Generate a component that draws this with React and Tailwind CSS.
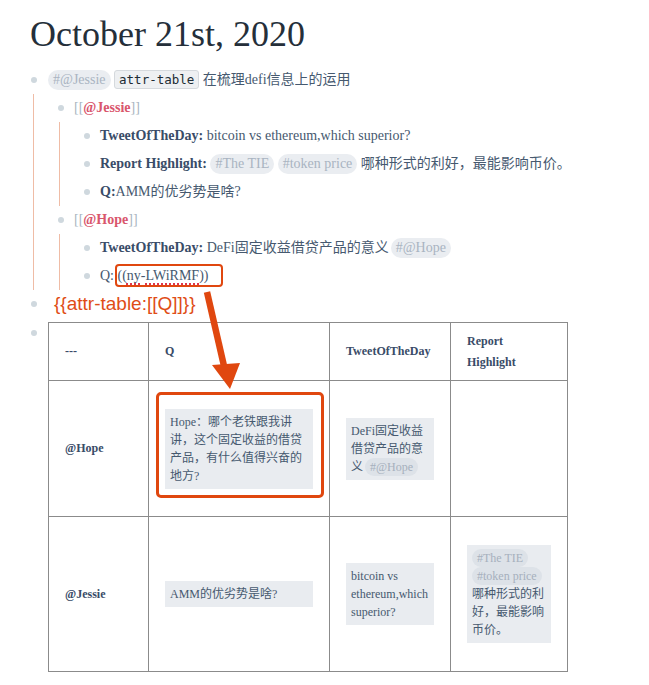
import React from "react";

const Bullet = ({ className = "" }) => (
  <span className={"block w-[6px] h-[6px] rounded-full bg-[#cfd8de] shrink-0 " + className} />
);

const Tag = ({ children, className = "" }) => (
  <span className={"inline-block rounded-full bg-[#eaedf1] text-[#a9b4c1] px-[5px] " + className}>
    {children}
  </span>
);

const PageRef = ({ children }) => (
  <span>
    <span className="text-[#a9b5c1]">[[</span>
    <span className="font-bold text-[#d9566c]">{children}</span>
    <span className="text-[#a9b5c1]">]]</span>
  </span>
);

const Row = ({ children, ml = "ml-[10px]" }) => (
  <div className="flex items-center h-[28px]">
    <Bullet />
    <div className={ml + " whitespace-nowrap leading-[20px]"}>{children}</div>
  </div>
);

const Bold = ({ children }) => <span className="font-bold text-[#394c68]">{children}</span>;

const Block = ({ children, className = "" }) => (
  <div className={"bg-[#e9ecf0] px-[5px] py-[4px] leading-[18px] text-[12px] text-[#46596f] " + className}>
    {children}
  </div>
);

const SmallTag = ({ children, className = "" }) => (
  <span className={"inline-block rounded-full bg-[#dde2e8] text-[#a6b0bd] px-[5px] leading-[18px] " + className}>{children}</span>
);

export default function App() {
  return (
    <div className="relative w-[649px] h-[685px] bg-white overflow-hidden font-['Liberation_Serif','Noto_Sans_CJK_SC',serif] text-[14px] text-[#46596f]">
      <h1 className="pl-[30px] pt-[16px] text-[36px] leading-[36px] text-[#252f3a] font-normal">
        October 21st, 2020
      </h1>

      <div className="mt-[14px] pl-[31px]">
        <Row ml="ml-[11px]">
          <Tag className="leading-[20px]">#@Jessie</Tag>{" "}
          <span className="inline-block font-['DejaVu_Sans_Mono',monospace] text-[12.5px] leading-[17px] text-[#202b33] bg-[#eef0f2] border border-[#d5d9dd] rounded-[3px] px-[4px]">
            attr-table
          </span>{" "}
          在梳理defi信息上的运用
        </Row>

        <div className="ml-[2px] border-l border-[#efbca6] pl-[24px]">
          <Row>
            <PageRef>@Jessie</PageRef>
          </Row>
          <div className="ml-[1px] border-l border-[#efbca6] pl-[24px]">
            <Row>
              <Bold>TweetOfTheDay:</Bold> bitcoin vs ethereum,which superior?
            </Row>
            <Row>
              <Bold>Report Highlight:</Bold> <Tag className="leading-[20px]">#The TIE</Tag>{" "}
              <Tag className="leading-[20px]">#token price</Tag> 哪种形式的利好，最能影响币价。
            </Row>
            <Row>
              <Bold>Q:</Bold>AMM的优劣势是啥?
            </Row>
          </div>
          <Row>
            <PageRef>@Hope</PageRef>
          </Row>
          <div className="ml-[1px] border-l border-[#efbca6] pl-[24px]">
            <Row>
              <Bold>TweetOfTheDay:</Bold> DeFi固定收益借贷产品的意义
              <Tag className="leading-[20px] ml-[2px]">#@Hope</Tag>
            </Row>
            <Row>
              Q: ((<span className="underline decoration-dotted decoration-[#e0364a] decoration-2 underline-offset-[3px]">ny</span>-<span className="underline decoration-dotted decoration-[#e0364a] decoration-2 underline-offset-[3px]">LWiRMF</span>))
            </Row>
          </div>
        </div>

        <div className="flex items-center h-[28px]">
          <Bullet />
          <div className="ml-[17px] whitespace-nowrap font-['Liberation_Sans',sans-serif] text-[19px] leading-[24px] text-[#e04d16]">
            {"{{attr-table:[[Q]]}}"}
          </div>
        </div>

        <div className="flex items-start">
          <Bullet className="mt-[12px]" />
          <table className="ml-[11px] mt-[4px] border-collapse table-fixed w-[519px]">
            <colgroup>
              <col className="w-[100px]" />
              <col className="w-[181px]" />
              <col className="w-[121px]" />
              <col className="w-[117px]" />
            </colgroup>
            <tbody className="text-[12px] leading-[21px]">
              <tr className="h-[58px]">
                <td className="border border-[#8b8b8b] px-[16px] align-middle font-bold text-[#394c68]">---</td>
                <td className="border border-[#8b8b8b] px-[16px] align-middle font-bold text-[#394c68]">Q</td>
                <td className="border border-[#8b8b8b] px-[16px] align-middle font-bold text-[#394c68]">TweetOfTheDay</td>
                <td className="border border-[#8b8b8b] px-[16px] align-middle font-bold text-[#394c68]">Report Highlight</td>
              </tr>
              <tr className="h-[136px]">
                <td className="border border-[#8b8b8b] px-[16px] align-middle font-bold text-[#394c68]">@Hope</td>
                <td className="border border-[#8b8b8b] px-[16px] align-middle">
                  <Block>Hope：哪个老铁跟我讲讲，这个固定收益的借贷产品，有什么值得兴奋的地方?</Block>
                </td>
                <td className="border border-[#8b8b8b] px-[16px] align-middle">
                  <Block>
                    DeFi固定收益借贷产品的意义<SmallTag className="ml-[2px]">#@Hope</SmallTag>
                  </Block>
                </td>
                <td className="border border-[#8b8b8b] px-[16px] align-middle"></td>
              </tr>
              <tr className="h-[155px]">
                <td className="border border-[#8b8b8b] px-[16px] align-middle font-bold text-[#394c68]">@Jessie</td>
                <td className="border border-[#8b8b8b] px-[16px] align-middle">
                  <Block>AMM的优劣势是啥?</Block>
                </td>
                <td className="border border-[#8b8b8b] px-[16px] align-middle">
                  <Block>bitcoin vs ethereum,which superior?</Block>
                </td>
                <td className="border border-[#8b8b8b] px-[16px] align-middle">
                  <Block>
                    <SmallTag>#The TIE</SmallTag> <SmallTag>#token price</SmallTag> 哪种形式的利好，最能影响币价。
                  </Block>
                </td>
              </tr>
            </tbody>
          </table>
        </div>
      </div>

      {/* annotations */}
      <div className="absolute left-[115px] top-[264px] w-[108px] h-[23px] border-[2.5px] border-[#e0470f] rounded-[4px]" />
      <div className="absolute left-[156px] top-[392px] w-[168px] h-[106px] border-[3px] border-[#e0470f] rounded-[5px]" />
      <svg className="absolute left-0 top-0 pointer-events-none" width="649" height="685" viewBox="0 0 649 685">
        <line x1="207" y1="292" x2="224" y2="366" stroke="#e0470f" strokeWidth="6.5" />
        <polygon points="212,365 240,363 230,389" fill="#e0470f" />
      </svg>
    </div>
  );
}
